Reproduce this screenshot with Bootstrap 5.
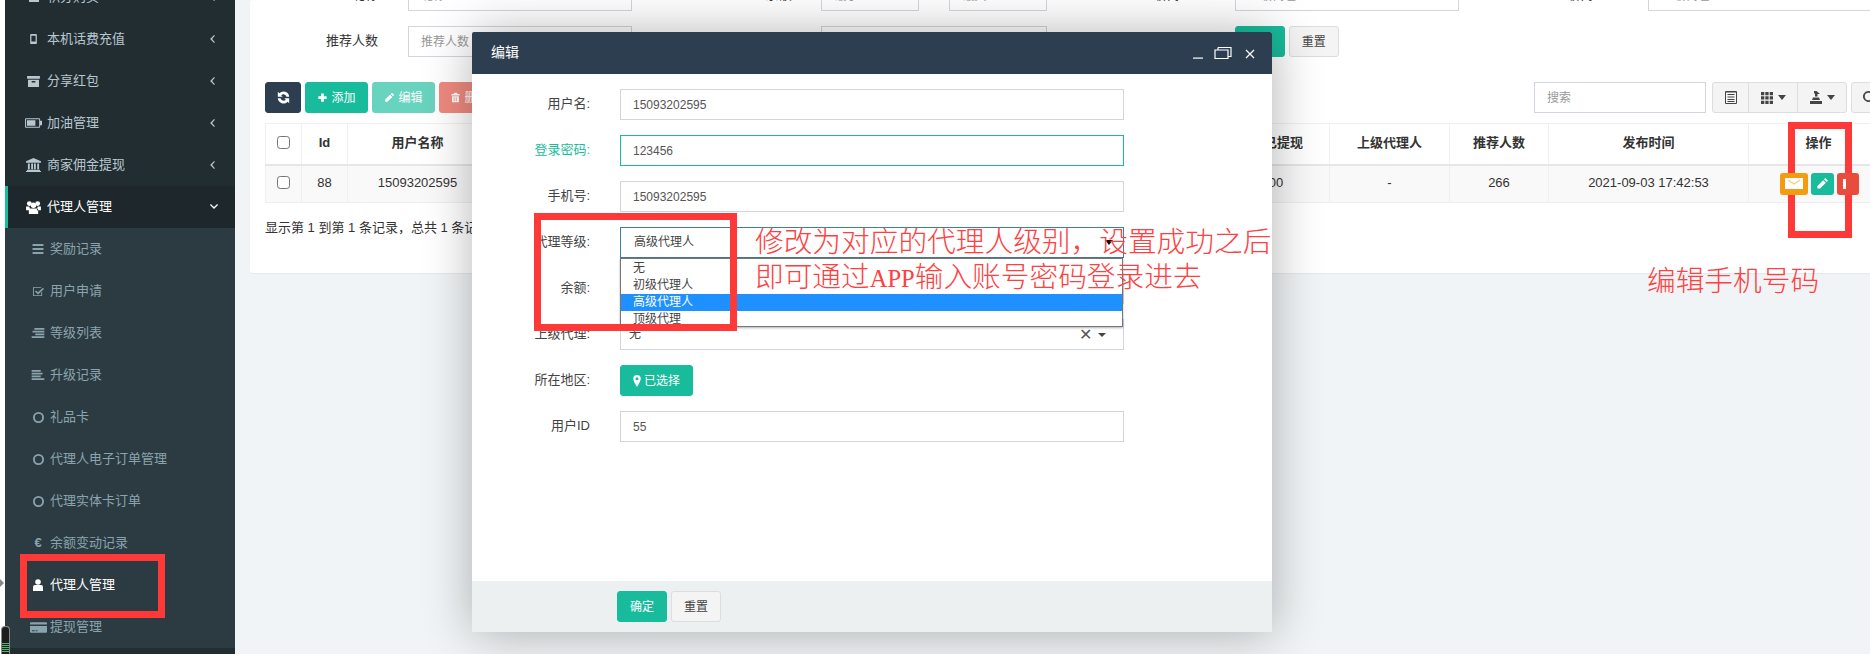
<!DOCTYPE html>
<html lang="zh-CN">
<head>
<meta charset="utf-8">
<title>代理人管理</title>
<link href="https://cdn.jsdelivr.net/npm/bootstrap@5.3.0/dist/css/bootstrap.min.css" rel="stylesheet">
<style>
html,body{height:654px;margin:0;overflow:hidden}
body{position:relative;background:#fff;font:13px/1.42857 "Liberation Sans","Noto Sans CJK SC",sans-serif;color:#333}
.ic{display:block;fill:currentColor;flex:none}
.frame{height:654px;padding-left:5px}
.side{width:230px;flex:none;background:#222d32;overflow:hidden;height:654px}
.side-list{list-style:none;padding:0;margin:-24px 0 0}
.side-link{display:flex;align-items:center;height:42px;padding-left:20px;color:#b8c7ce;text-decoration:none;position:relative}
.side-link.on{background:#1e282c;color:#fff;border-left:3px solid #18bc9c;padding-left:17px}
.ibox{width:22px;flex:none;display:flex;justify-content:center;padding-right:5px}
.caret-r{position:absolute;left:205px;top:17px}
.caret-d{position:absolute;left:202px;top:18px}
.sub-list{list-style:none;padding:0;margin:0;background:#2c3b41}
.sub-link{display:flex;align-items:center;height:42px;padding-left:24px;color:#8aa4af;text-decoration:none}
.sub-link .ibox{width:21px;padding-right:3px}
.sub-link.on{color:#fff}
.work{flex:1;min-width:0;background:#f1f4f6;padding-left:15px;height:654px;overflow:hidden}
.sheet{width:1653px;height:273px;background:#fff;border-radius:3px;padding:0 15px;box-shadow:0 1px 1px rgba(0,0,0,.05);overflow:hidden}
.query{display:grid;grid-template-columns:repeat(4,413.4px);grid-auto-rows:31px;row-gap:15px;margin:-20px 0 25px -15px}
.q-cell{display:flex;align-items:center}
.q-label{width:128px;text-align:right;margin-right:30px;flex:none}
.fld{border:1px solid #d2d4de;border-radius:0;height:31px;padding:5px 12px;font-size:12px;color:#555;width:224px;background:#fff;box-shadow:none}
.fld::placeholder{color:#999}
.fld-half{width:98px}
.q-dash{width:30px;flex:none}
.fld-mid{width:226px}
.btn-x{height:31px;font-size:12px;line-height:1.5;padding:5px 0;border-radius:3px;display:inline-flex;align-items:center;justify-content:center;gap:3px}
.tone-teal{background:#18bc9c;border:1px solid #18bc9c;color:#fff}
.tone-navy{background:#2c3e50;border:1px solid #2c3e50;color:#fff}
.tone-red{background:#e74c3c;border:1px solid #e74c3c;color:#fff}
.tone-soft{background:#f4f4f4;border:1px solid #ddd;color:#444}
.faded{opacity:.65}
.w36{width:36px}.w37{width:37px}.w50{width:50px}.w63{width:63px}.w62{width:61px}.w73{width:73px}
.tools{width:1623px;height:31px;margin-bottom:10px}
.finder{width:172px}
.group-x{margin-left:2px}
.group-x .btn-x{border-radius:0;margin-left:-1px}
.group-x .btn-x:first-child{border-radius:3px 0 0 3px;margin-left:0;width:37px}
.group-x .btn-x:last-child{border-radius:0 3px 3px 0}
.grid-x{table-layout:fixed;width:1623px;margin:0;border:1px solid #f4f4f4;--bs-table-bg:transparent;color:#333}
.grid-x th,.grid-x td{padding:0;text-align:center;vertical-align:middle;border:1px solid #f0f0f0;box-shadow:none}
.grid-x thead th{height:41px;border-bottom:2px solid #e6e6e6;font-weight:600}
.grid-x tbody td{height:38px;background:#f9f9f9;border-bottom:1px solid #eee}
.grid-x col:nth-child(1){width:36px}
.grid-x col:nth-child(2){width:46px}
.grid-x col:nth-child(3),.grid-x col:nth-child(11){width:140px}
.grid-x col:nth-child(4){width:240px}
.grid-x col:nth-child(5),.grid-x col:nth-child(6){width:242px}
.grid-x col:nth-child(7){width:118px}
.grid-x col:nth-child(8){width:120px}
.grid-x col:nth-child(9){width:99px}
.grid-x col:nth-child(10){width:200px}
.tick{width:13px;height:13px;border:1px solid #767676;border-radius:2px;float:none;display:block;margin:-2px auto 0}
.acts{display:flex;gap:3px;padding-left:31px;position:relative;z-index:5}
.act{height:22px;border-radius:3px;display:flex;align-items:center;justify-content:center;color:#fff;overflow:hidden}
.a1{width:28px;background:#f39c12}.a2{width:23px;background:#18bc9c}.a3{width:22px;background:#e74c3c;justify-content:flex-start;padding-left:6px}
.count{margin-top:16px;line-height:18px}
.dlg{position:absolute;left:472px;top:32px;width:800px;height:600px;background:#fff;border-radius:2px;box-shadow:1px 1px 50px rgba(0,0,0,.3);z-index:3;display:flex;flex-direction:column}
.dlg-head{height:42px;flex:none;background:#2c3e50;color:#fff;font-size:14px;padding-left:19px;padding-right:17px;border-radius:2px 2px 0 0}
.dlg-body{flex:1;padding-top:15px}
.d-row{display:flex;align-items:center;height:31px;margin-bottom:15px;position:relative}
.d-label{width:118px;text-align:right;margin-right:30px;flex:none;color:#444}
.d-label.ok{color:#18bc9c}
.fld-d{width:504px}
.fld-d.ok{border-color:#18bc9c}
.pick{width:504px;height:31px;border:1px solid #3f7ea6;border-bottom-color:#4a7894;padding:0 13px;font-size:12px;display:flex;align-items:center;justify-content:space-between;color:#444;background:#fff}
.pick-tri{width:0;height:0;border:4px solid transparent;border-top:5px solid #111;border-bottom:0;margin-right:-3px;position:relative;z-index:6}
.tri-sm{border-top-color:#444;margin:0 0 0 2px}
.pick-menu{position:absolute;left:148px;top:31px;width:503px;height:69px;background:#fff;border:1px solid #767676;box-shadow:0 1px 2px rgba(0,0,0,.3);font-size:12px;color:#444;z-index:2;padding-top:1px}
.pick-opt{height:17px;line-height:17px;padding-left:12px}
.pick-opt.cur{background:#1e90ff;color:#fff}
.pick2{width:504px;height:31px;border:1px solid #d2d4de;padding:0 8px;font-size:12px;color:#444;display:flex;align-items:center}
.pick2 .clr{margin-left:auto;font-size:16px;color:#555;line-height:1}
.pick2 .tri2{width:0;height:0;border:4px solid transparent;border-top:4px solid #444;border-bottom:0;margin:0 9px 0 6px}
.dlg-foot{height:51px;flex:none;background:#ecf0f1;padding:10px 0 0 145px;display:flex;gap:4px;border-radius:0 0 2px 2px}
.mark-box{position:absolute;border:7px solid #ff3838;z-index:4;pointer-events:none}
.m1{left:534px;top:213px;width:203px;height:118px}
.m2{left:1788px;top:122px;width:64px;height:116px}
.m3{left:20px;top:554px;width:145px;height:64px}
.note{position:absolute;z-index:4;color:#ff4040;font-family:"Liberation Serif","Noto Sans CJK SC",serif;font-size:28.7px;font-weight:300;line-height:40px;white-space:nowrap}
.latin{font-size:24.500px}
.n1{left:755px;top:222px}
.n2{left:755px;top:257px}
.n3{left:1647px;top:261px}
.gadget{position:absolute;left:1px;bottom:0;width:9px;height:28px;background:#1d1d1d;border:1px solid #8a8a8a;border-bottom:0;border-radius:4px 4px 0 0;z-index:1;overflow:hidden}
.gadget i{display:block;height:9px;margin-top:16px;background:repeating-linear-gradient(#3fbf6f 0 1px,#1d1d1d 1px 2px)}
.nub{position:absolute;left:0;top:579px;width:0;height:0;border:4px solid transparent;border-left:4px solid #888;border-right:0}
</style>
</head>
<body>
<svg width="0" height="0" class="position-absolute">
  <symbol id="i-pen" viewBox="0 0 16 16"><path d="M11.500 1.200l3.300 3.300-1.700 1.700-3.300-3.300zM8.800 3.900l3.300 3.300L5 14.300H1.700V11z"/></symbol>
  <symbol id="i-plus" viewBox="0 0 16 16"><path d="M6 2h4v4h4v4h-4v4H6v-4H2V6h4z"/></symbol>
  <symbol id="i-trash" viewBox="0 0 16 16"><path d="M6 1h4l1 2h3v2H2V3h3zM3 6h10v9H3zm2.500 1.500v6h1v-6zm3 0v6h1v-6z" fill-rule="evenodd"/></symbol>
  <symbol id="i-sync" viewBox="0 0 16 16"><path d="M15 7h-3.400A3.900 3.900 0 0 0 5.200 5.200L7 7H1V1l1.900 1.900A7 7 0 0 1 15 7zM1 9h3.400a3.900 3.900 0 0 0 6.400 1.800L9 9h6v6l-1.900-1.900A7 7 0 0 1 1 9z"/></symbol>
  <symbol id="i-pin" viewBox="0 0 10 16"><path d="M5 0a5 5 0 0 1 5 5c0 2.500-3 8-5 11C3 13 0 7.500 0 5a5 5 0 0 1 5-5zm0 3a2 2 0 1 0 0 4 2 2 0 0 0 0-4z" fill-rule="evenodd"/></symbol>
  <symbol id="i-mobile" viewBox="0 0 8 12"><path d="M1 0h6a1 1 0 0 1 1 1v10a1 1 0 0 1-1 1H1a1 1 0 0 1-1-1V1a1 1 0 0 1 1-1zm.5 2v7h5V2z" fill-rule="evenodd"/></symbol>
  <symbol id="i-box" viewBox="0 0 14 12"><path d="M0 0h14v3H0zM1 4h12v8H1zm4 1.500v1.500h4V5.500z" fill-rule="evenodd"/></symbol>
  <symbol id="i-batt" viewBox="0 0 18 10"><path d="M1 0h14a1 1 0 0 1 1 1v1.500h2v5h-2V9a1 1 0 0 1-1 1H1a1 1 0 0 1-1-1V1a1 1 0 0 1 1-1zm0 1v8h14V1zm1 1h9v6H2z" fill-rule="evenodd"/></symbol>
  <symbol id="i-bank" viewBox="0 0 16 15"><path d="M8 0l8 3.500V5H0V3.500zM2 6h2v6H2zm3.500 0h2v6h-2zm3 0h2v6h-2zM12 6h2v6h-2zM1 12.500h14V14H1zM0 14h16v1H0z"/></symbol>
  <symbol id="i-users" viewBox="0 0 16 14"><circle cx="3.500" cy="2.800" r="2.600"/><circle cx="12.500" cy="2.800" r="2.600"/><circle cx="8" cy="4.500" r="3"/><path d="M0 6h3.500l1 4H0zM16 6h-3.500l-1 4H16zM4.500 8h7a1.500 1.500 0 0 1 1.500 1.500V14H3V9.500A1.500 1.500 0 0 1 4.500 8z"/></symbol>
  <symbol id="i-bars" viewBox="0 0 12 11"><path d="M0 0h12v2.300H0zM0 4.300h12v2.300H0zM0 8.700h12V11H0z"/></symbol>
  <symbol id="i-check" viewBox="0 0 13 12"><path d="M1.500 1H10v1H2v8h8V7l1-1v4.500a.5.5 0 0 1-.5.5h-9a.5.5 0 0 1-.5-.5v-9a.5.5 0 0 1 .5-.5zM12 2l1 1.200-6.500 6L3.200 6l1.200-1.200 2.100 2z"/></symbol>
  <symbol id="i-alignc" viewBox="0 0 14 11"><path d="M3 0h11v2H3zM1 3h13v2H1zM4 6h10v2H4zM0 9h14v2H0z"/></symbol>
  <symbol id="i-alignl" viewBox="0 0 14 11"><path d="M0 0h10v2H0zM0 3h12v2H0zM0 6h10v2H0zM0 9h14v2H0z"/></symbol>
  <symbol id="i-circle" viewBox="0 0 12 12"><path d="M6 0a6 6 0 1 1 0 12A6 6 0 0 1 6 0zm0 2a4 4 0 1 0 0 8 4 4 0 0 0 0-8z" fill-rule="evenodd"/></symbol>
  <symbol id="i-user" viewBox="0 0 10 12"><circle cx="5" cy="3" r="2.800"/><path d="M2 6h6a2 2 0 0 1 2 2v4H0V8a2 2 0 0 1 2-2z"/></symbol>
  <symbol id="i-card" viewBox="0 0 18 11"><path d="M1 0h16a1 1 0 0 1 1 1v1.200H0V1a1 1 0 0 1 1-1zM0 4h18v6a1 1 0 0 1-1 1H1a1 1 0 0 1-1-1zm2 4.500v1h3v-1zm4 0v1h2v-1z" fill-rule="evenodd"/></symbol>
  <symbol id="i-list" viewBox="0 0 12 13"><path d="M1 0h10a1 1 0 0 1 1 1v11a1 1 0 0 1-1 1H1a1 1 0 0 1-1-1V1a1 1 0 0 1 1-1zm0 1.500V12h10V1.500zM2.500 3h7v1h-7zm0 2.500h7v1h-7zm0 2.500h7v1h-7zm0 2h7v1h-7z" fill-rule="evenodd"/></symbol>
  <symbol id="i-grid" viewBox="0 0 12 12"><path d="M0 0h3.300v3.300H0zM4.300 0h3.300v3.300H4.300zM8.700 0H12v3.300H8.700zM0 4.300h3.300v3.300H0zM4.300 4.300h3.300v3.300H4.300zM8.700 4.300H12v3.300H8.700zM0 8.700h3.300V12H0zM4.300 8.700h3.300V12H4.300zM8.700 8.700H12V12H8.700z"/></symbol>
  <symbol id="i-export" viewBox="0 0 12 13"><path d="M5 5.500h2.500V3H10L6.500 0 4 0v2l1 1zM3 6.500h6l1 2.500H2zM0 10h12v3H0z"/></symbol>
  <symbol id="i-search" viewBox="0 0 13 13"><path d="M5.500 0a5.500 5.500 0 0 1 4.400 8.800l3 3-1.100 1.100-3-3A5.500 5.500 0 1 1 5.500 0zm0 1.800a3.700 3.700 0 1 0 0 7.400 3.700 3.700 0 0 0 0-7.400z" fill-rule="evenodd"/></symbol>
  <symbol id="i-left" viewBox="0 0 6 10"><path d="M5 0l1 1-3.500 4L6 9l-1 1L0 5z"/></symbol>
  <symbol id="i-down" viewBox="0 0 10 6"><path d="M1 0l4 3.500L9 0l1 1-5 5-5-5z"/></symbol>
  <symbol id="i-mail" viewBox="0 0 18 11"><path d="M0 0h18v11H0z" fill="#fff"/><path d="M3 2l6 4 6-4" fill="none" stroke="#fbd07a" stroke-width="1.300"/></symbol>
</svg>

<div class="d-flex frame">
  <nav class="side">
    <ul class="side-list">
      <li><a class="side-link" href="#"><span class="ibox"><svg class="ic" width="12" height="10"><use href="#i-box"/></svg></span>积分购买<svg class="ic caret-r" width="5" height="8"><use href="#i-left"/></svg></a></li>
      <li><a class="side-link" href="#"><span class="ibox"><svg class="ic" width="7" height="10"><use href="#i-mobile"/></svg></span>本机话费充值<svg class="ic caret-r" width="5" height="8"><use href="#i-left"/></svg></a></li>
      <li><a class="side-link" href="#"><span class="ibox"><svg class="ic" width="13" height="11"><use href="#i-box"/></svg></span>分享红包<svg class="ic caret-r" width="5" height="8"><use href="#i-left"/></svg></a></li>
      <li><a class="side-link" href="#"><span class="ibox"><svg class="ic" width="17" height="10"><use href="#i-batt"/></svg></span>加油管理<svg class="ic caret-r" width="5" height="8"><use href="#i-left"/></svg></a></li>
      <li><a class="side-link" href="#"><span class="ibox"><svg class="ic" width="15" height="14"><use href="#i-bank"/></svg></span>商家佣金提现<svg class="ic caret-r" width="5" height="8"><use href="#i-left"/></svg></a></li>
      <li><a class="side-link on" href="#"><span class="ibox"><svg class="ic" width="15" height="13"><use href="#i-users"/></svg></span>代理人管理<svg class="ic caret-d" width="8" height="5"><use href="#i-down"/></svg></a>
        <ul class="sub-list">
          <li><a class="sub-link" href="#"><span class="ibox"><svg class="ic" width="12" height="10"><use href="#i-bars"/></svg></span>奖励记录</a></li>
          <li><a class="sub-link" href="#"><span class="ibox"><svg class="ic" width="12" height="11"><use href="#i-check"/></svg></span>用户申请</a></li>
          <li><a class="sub-link" href="#"><span class="ibox"><svg class="ic" width="14" height="10"><use href="#i-alignc"/></svg></span>等级列表</a></li>
          <li><a class="sub-link" href="#"><span class="ibox"><svg class="ic" width="14" height="10"><use href="#i-alignl"/></svg></span>升级记录</a></li>
          <li><a class="sub-link" href="#"><span class="ibox"><svg class="ic" width="11" height="11"><use href="#i-circle"/></svg></span>礼品卡</a></li>
          <li><a class="sub-link" href="#"><span class="ibox"><svg class="ic" width="11" height="11"><use href="#i-circle"/></svg></span>代理人电子订单管理</a></li>
          <li><a class="sub-link" href="#"><span class="ibox"><svg class="ic" width="11" height="11"><use href="#i-circle"/></svg></span>代理实体卡订单</a></li>
          <li><a class="sub-link" href="#"><span class="ibox fw-bold">€</span>余额变动记录</a></li>
          <li><a class="sub-link on" href="#"><span class="ibox"><svg class="ic" width="10" height="12"><use href="#i-user"/></svg></span>代理人管理</a></li>
          <li><a class="sub-link" href="#"><span class="ibox"><svg class="ic" width="17" height="11"><use href="#i-card"/></svg></span>提现管理</a></li>
        </ul>
      </li>
    </ul>
  </nav>

  <main class="work">
    <section class="sheet">
      <form class="query">
        <div class="q-cell"><label class="q-label">昵称</label><input class="form-control fld" placeholder="昵称"></div>
        <div class="q-cell"><label class="q-label">余额</label><input class="form-control fld fld-half" placeholder="最小"><span class="q-dash"></span><input class="form-control fld fld-half" placeholder="最大"></div>
        <div class="q-cell"><label class="q-label">上级代理人</label><input class="form-control fld" placeholder="上级代理人"></div>
        <div class="q-cell"><label class="q-label">上级代理人</label><input class="form-control fld" placeholder="上级代理人"></div>
        <div class="q-cell"><label class="q-label">推荐人数</label><input class="form-control fld" placeholder="推荐人数"></div>
        <div class="q-cell"><label class="q-label">发布时间</label><input class="form-control fld fld-mid"></div>
        <div class="q-cell"><span class="q-label"></span><span class="d-flex gap-1"><button type="button" class="btn btn-x tone-teal w50">提交</button><button type="button" class="btn btn-x tone-soft w50">重置</button></span></div>
      </form>

      <div class="d-flex tools gap-1">
        <button type="button" class="btn btn-x tone-navy w36"><svg class="ic" width="13" height="13"><use href="#i-sync"/></svg></button>
        <button type="button" class="btn btn-x tone-teal w63"><svg class="ic" width="11" height="11"><use href="#i-plus"/></svg>添加</button>
        <button type="button" class="btn btn-x tone-teal w63 faded"><svg class="ic" width="11" height="11"><use href="#i-pen"/></svg>编辑</button>
        <button type="button" class="btn btn-x tone-red w62 faded"><svg class="ic" width="11" height="11"><use href="#i-trash"/></svg>删除</button>
        <input class="form-control fld finder ms-auto" placeholder="搜索">
        <div class="d-flex group-x">
          <button type="button" class="btn btn-x tone-soft"><svg class="ic" width="12" height="13"><use href="#i-list"/></svg></button>
          <button type="button" class="btn btn-x tone-soft w50"><svg class="ic" width="12" height="12"><use href="#i-grid"/></svg><span class="pick-tri tri-sm"></span></button>
          <button type="button" class="btn btn-x tone-soft w50"><svg class="ic" width="12" height="13"><use href="#i-export"/></svg><span class="pick-tri tri-sm"></span></button>
        </div>
        <button type="button" class="btn btn-x tone-soft w37"><svg class="ic" width="13" height="13"><use href="#i-search"/></svg></button>
      </div>

      <table class="table grid-x">
        <colgroup><col><col><col><col><col><col><col><col><col><col><col></colgroup>
        <thead><tr><th><input type="checkbox" class="form-check-input tick"></th><th>Id</th><th>用户名称</th><th>手机号</th><th>代理等级</th><th>余额</th><th>累计已提现</th><th>上级代理人</th><th>推荐人数</th><th>发布时间</th><th>操作</th></tr></thead>
        <tbody><tr><td><input type="checkbox" class="form-check-input tick"></td><td>88</td><td>15093202595</td><td>15093202595</td><td>高级代理人</td><td>0.00</td><td>0.00</td><td>-</td><td>266</td><td>2021-09-03 17:42:53</td>
          <td><div class="acts"><span class="act a1"><svg class="ic" width="18" height="11"><use href="#i-mail"/></svg></span><span class="act a2"><svg class="ic" width="13" height="13"><use href="#i-pen"/></svg></span><span class="act a3"><svg class="ic" width="3" height="10"><rect width="3" height="10" fill="#fff"/></svg></span></div></td></tr></tbody>
      </table>
      <div class="count">显示第 1 到第 1 条记录，总共 1 条记录</div>
    </section>
  </main>
</div>

<div class="dlg">
  <div class="dlg-head d-flex align-items-center">
    <span>编辑</span>
    <svg class="ms-auto ic" width="62" height="12" viewBox="0 0 62 12"><path d="M0 10.500h10v1.200H0z"/><path d="M25 .500h13v9h-3M25 .500v2.500M22 3h13v8.500H22z" fill="none" stroke="#fff" stroke-width="1.200"/><path d="M53 3l8 8M61 3l-8 8" fill="none" stroke="#fff" stroke-width="1.200"/></svg>
  </div>
  <form class="dlg-body">
    <div class="d-row"><label class="d-label">用户名:</label><input class="form-control fld fld-d" value="15093202595"></div>
    <div class="d-row"><label class="d-label ok">登录密码:</label><input class="form-control fld fld-d ok" value="123456"></div>
    <div class="d-row"><label class="d-label">手机号:</label><input class="form-control fld fld-d" value="15093202595"></div>
    <div class="d-row"><label class="d-label">代理等级:</label>
      <div class="pick"><span>高级代理人</span><span class="pick-tri"></span></div>
      <div class="pick-menu"><div class="pick-opt">无</div><div class="pick-opt">初级代理人</div><div class="pick-opt cur">高级代理人</div><div class="pick-opt">顶级代理</div></div>
    </div>
    <div class="d-row"><label class="d-label">余额:</label><input class="form-control fld fld-d" value="0.00"></div>
    <div class="d-row"><label class="d-label">上级代理:</label><div class="pick2"><span>无</span><span class="clr">✕</span><span class="tri2"></span></div></div>
    <div class="d-row"><label class="d-label">所在地区:</label><button type="button" class="btn btn-x tone-teal w73"><svg class="ic" width="8" height="12"><use href="#i-pin"/></svg>已选择</button></div>
    <div class="d-row"><label class="d-label">用户ID</label><input class="form-control fld fld-d" value="55"></div>
  </form>
  <div class="dlg-foot"><button type="button" class="btn btn-x tone-teal w50">确定</button><button type="button" class="btn btn-x tone-soft w50">重置</button></div>
</div>

<div class="mark-box m1"></div>
<div class="mark-box m2"></div>
<div class="mark-box m3"></div>
<div class="note n1">修改为对应的代理人级别，设置成功之后</div>
<div class="note n2">即可通过<span class="latin">APP</span>输入账号密码登录进去</div>
<div class="note n3">编辑手机号码</div>
<div class="nub"></div>
<div class="gadget"><i></i></div>
</body>
</html>
